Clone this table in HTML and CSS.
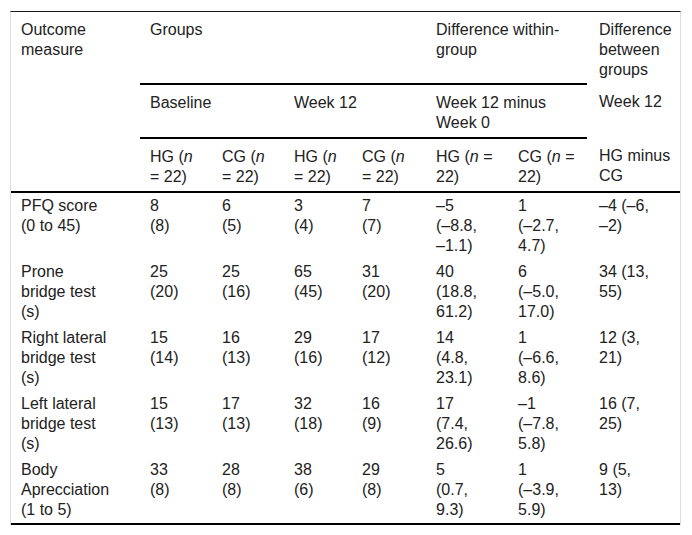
FILE: index.html
```html
<!DOCTYPE html>
<html lang="en">
<head>
    <meta charset="UTF-8">
    <meta name="viewport" content="width=device-width, initial-scale=1.0">
    <title>Outcome measures</title>
    <link rel="stylesheet" href="styles.css">
</head>
<body>
    <div class="table-wrap">
        <table class="results">
            <colgroup>
                <col class="c-label">
                <col class="c1"><col class="c2"><col class="c3"><col class="c4">
                <col class="c5"><col class="c6">
                <col class="c7">
            </colgroup>
            <thead>
                <tr>
                    <th rowspan="3" class="label last">Outcome measure</th>
                    <th colspan="4" class="rule">Groups</th>
                    <th colspan="2" class="rule">Difference within-group</th>
                    <th class="between">Difference between groups</th>
                </tr>
                <tr>
                    <th colspan="2" class="rule">Baseline</th>
                    <th colspan="2" class="rule">Week 12</th>
                    <th colspan="2" class="rule">Week 12 minus Week 0</th>
                    <th class="between">Week 12</th>
                </tr>
                <tr>
                    <th class="last">HG (<i>n</i> = 22)</th>
                    <th class="last">CG (<i>n</i> = 22)</th>
                    <th class="last">HG (<i>n</i> = 22)</th>
                    <th class="last">CG (<i>n</i> = 22)</th>
                    <th class="last">HG (<i>n</i> = 22)</th>
                    <th class="last">CG (<i>n</i> = 22)</th>
                    <th class="last between">HG minus CG</th>
                </tr>
            </thead>
            <tbody>
                <tr>
                    <td class="label">PFQ score (0 to 45)</td>
                    <td>8<br>(8)</td>
                    <td>6<br>(5)</td>
                    <td>3<br>(4)</td>
                    <td>7<br>(7)</td>
                    <td>–5<br>(–8.8,<br>–1.1)</td>
                    <td>1<br>(–2.7,<br>4.7)</td>
                    <td class="between">–4 (–6,<br>–2)</td>
                </tr>
                <tr>
                    <td class="label">Prone bridge test (s)</td>
                    <td>25<br>(20)</td>
                    <td>25<br>(16)</td>
                    <td>65<br>(45)</td>
                    <td>31<br>(20)</td>
                    <td>40<br>(18.8,<br>61.2)</td>
                    <td>6<br>(–5.0,<br>17.0)</td>
                    <td class="between">34 (13,<br>55)</td>
                </tr>
                <tr>
                    <td class="label">Right lateral bridge test (s)</td>
                    <td>15<br>(14)</td>
                    <td>16<br>(13)</td>
                    <td>29<br>(16)</td>
                    <td>17<br>(12)</td>
                    <td>14<br>(4.8,<br>23.1)</td>
                    <td>1<br>(–6.6,<br>8.6)</td>
                    <td class="between">12 (3,<br>21)</td>
                </tr>
                <tr>
                    <td class="label">Left lateral bridge test (s)</td>
                    <td>15<br>(13)</td>
                    <td>17<br>(13)</td>
                    <td>32<br>(18)</td>
                    <td>16<br>(9)</td>
                    <td>17<br>(7.4,<br>26.6)</td>
                    <td>–1<br>(–7.8,<br>5.8)</td>
                    <td class="between">16 (7,<br>25)</td>
                </tr>
                <tr>
                    <td class="label">Body Aprecciation (1 to 5)</td>
                    <td>33<br>(8)</td>
                    <td>28<br>(8)</td>
                    <td>38<br>(6)</td>
                    <td>29<br>(8)</td>
                    <td>5<br>(0.7,<br>9.3)</td>
                    <td>1<br>(–3.9,<br>5.9)</td>
                    <td class="between">9 (5,<br>13)</td>
                </tr>
            </tbody>
        </table>
    </div>
</body>
</html>
```

FILE: styles.css
```css
body {
    margin: 0;
    padding: 0;
    background: #fff;
    color: #222;
    font-family: "Liberation Sans", Arial, sans-serif;
    font-size: 16px;
    line-height: 20px;
}

.table-wrap {
    width: 671px;
    box-sizing: border-box;
    margin: 11px 0 0 10px;
    border-top: 1px solid #1a1a1a;
    border-left: 1px solid #dcdcdc;
    border-right: 1px solid #dcdcdc;
}

.results {
    width: 669px;
    border-collapse: collapse;
    table-layout: fixed;
}

.c-label { width: 129px; }
.c1 { width: 72px; }
.c2 { width: 72px; }
.c3 { width: 68px; }
.c4 { width: 74px; }
.c5 { width: 82px; }
.c6 { width: 79px; }
.c7 { width: 93px; }

.results th,
.results td {
    text-align: left;
    vertical-align: top;
    font-weight: normal;
    padding: 3px 10px;
}

.results th {
    padding-top: 8px;
    padding-bottom: 4px;
}

.results th.rule,
.results th.last {
    border-bottom: 2px solid #000;
}

.results .label {
    padding-right: 30px;
}

.results .between {
    padding-left: 12px;
    padding-right: 5px;
}

.results tbody tr:last-child td {
    border-bottom: 2px solid #000;
}
```
